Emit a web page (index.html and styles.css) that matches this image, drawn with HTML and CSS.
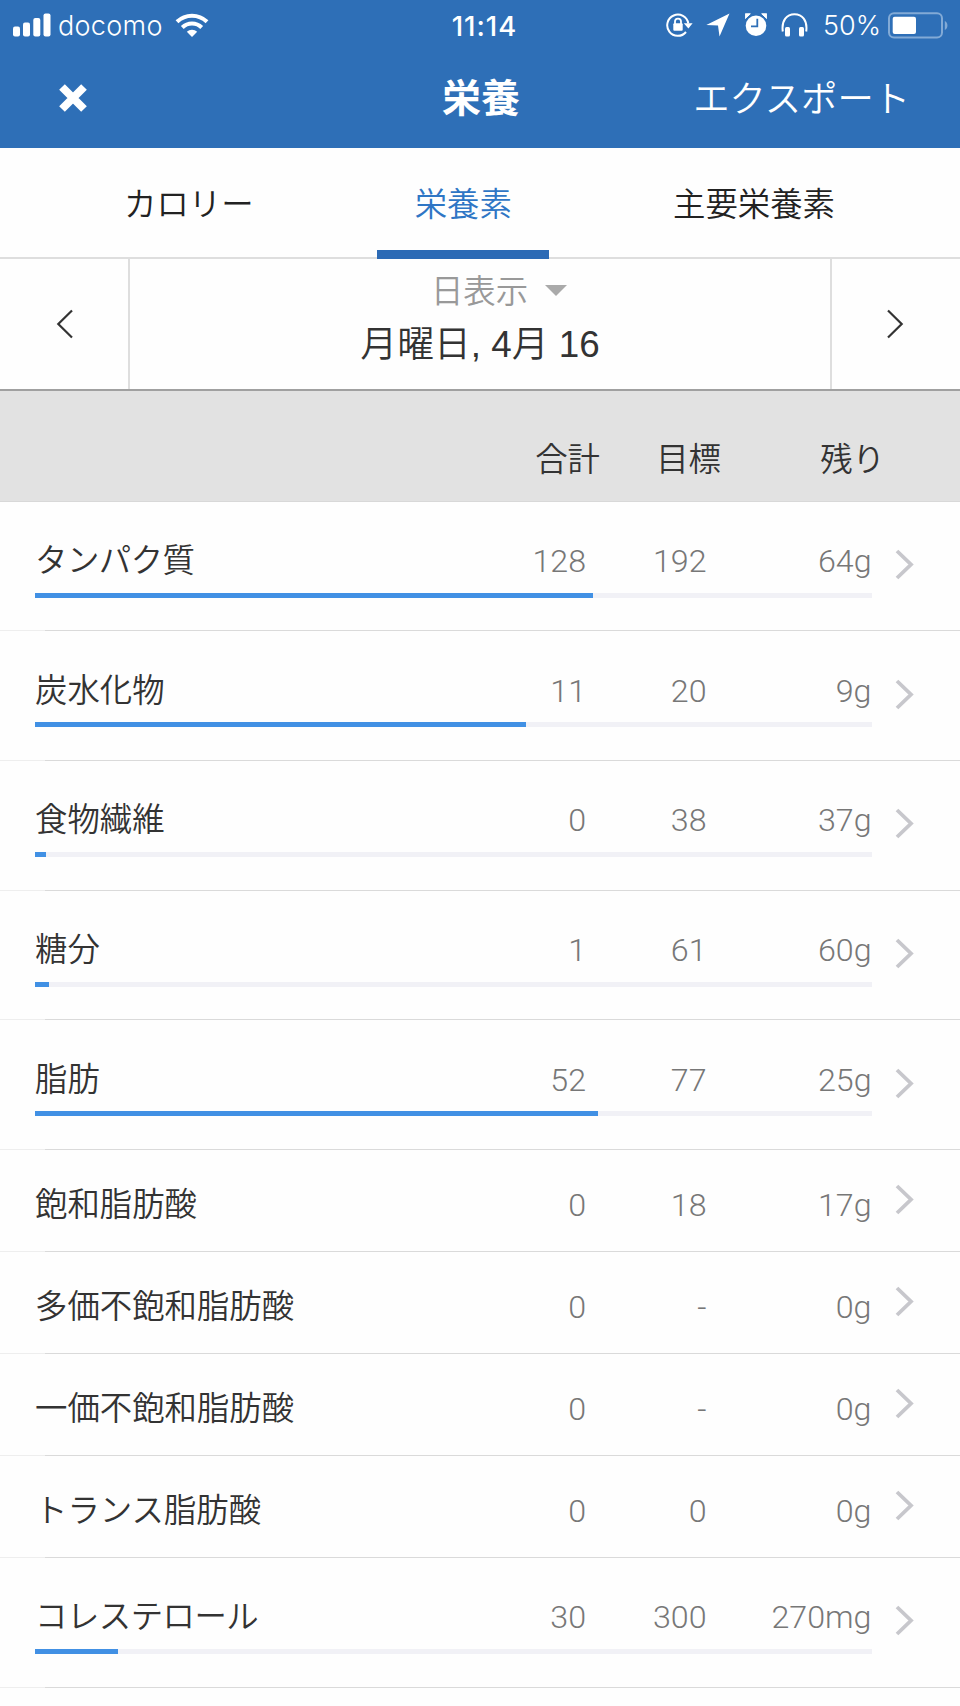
FILE: index.html
```
<!DOCTYPE html>
<html lang="ja">
<head>
    <meta charset="UTF-8">
    <title>栄養</title>

    <link rel="stylesheet" href="styles.css">

</head>
<body>

<svg class="defs">
    <symbol id="arrow" viewBox="0 0 20 32">
        <path d="M2 2 L16 15.5 L2 29" fill="none" stroke="currentColor" stroke-width="3.8"/>
    </symbol>
</svg>

<div class="header">
    <div class="status">
        <div class="status_left">
            <svg class="signal" width="38" height="24" viewBox="0 0 38 24" fill="#fff">
                <rect x="0" y="13.5" width="7" height="10" rx="2"/>
                <rect x="10" y="9.5" width="7" height="14" rx="2"/>
                <rect x="20.3" y="5" width="7" height="18.5" rx="2"/>
                <rect x="30.5" y="0.5" width="7" height="23" rx="2"/>
            </svg>
            <span class="carrier">docomo</span>
            <svg class="wifi" width="34" height="24" viewBox="0 0 34 24">
                <g fill="none" stroke="#fff" stroke-width="4">
                    <path d="M2 8.8 A21.5 21.5 0 0 1 32 8.8"/>
                    <path d="M7.3 14.5 A13.8 13.8 0 0 1 26.7 14.5"/>
                </g>
                <path d="M17 24 L11.8 18.8 A7.4 7.4 0 0 1 22.2 18.8 Z" fill="#fff"/>
            </svg>
        </div>
        <span class="time">11:14</span>
        <div class="status_right">
            <svg class="lock" width="27" height="24" viewBox="0 0 27 24">
                <path d="M20 19 A10.6 10.6 0 1 1 22.3 10.5" fill="none" stroke="#fff" stroke-width="2"/>
                <path d="M17.8 10.3 H26.6 L22.4 15.6 Z" fill="#fff"/>
                <rect x="7.3" y="10.2" width="9.4" height="7.6" rx="1" fill="#fff"/>
                <path d="M9 11 V8.6 A3 3 0 0 1 15 8.6 V11" fill="none" stroke="#fff" stroke-width="1.8"/>
            </svg>
            <svg class="location" width="24" height="24" viewBox="0 0 24 24" fill="#fff">
                <path d="M23.5 0.5 L13.5 23.5 L12 12.4 L0.3 12.1 Z"/>
            </svg>
            <svg class="alarm" width="22" height="24" viewBox="0 0 22 24">
                <circle cx="11" cy="12.7" r="10.3" fill="#fff"/>
                <path d="M0.3 5.5 V0.8 H5.3 Z M21.7 5.5 V0.8 H16.7 Z" fill="#fff" stroke="#fff" stroke-width="1"/>
                <path d="M12.3 5.8 V13.3 H6" fill="none" stroke="#2e6fb7" stroke-width="1.8"/>
            </svg>
            <svg class="phones" width="27" height="24" viewBox="0 0 27 24">
                <path d="M1.8 18.5 C0.2 7 6 1.2 13.5 1.2 C21 1.2 26.8 7 25.2 18.5" fill="none" stroke="#fff" stroke-width="2"/>
                <rect x="4" y="14" width="5" height="9.5" rx="1.5" fill="#fff"/>
                <rect x="18" y="14" width="5" height="9.5" rx="1.5" fill="#fff"/>
            </svg>
            <span class="percent">50%</span>
            <svg class="battery" width="60" height="27" viewBox="0 0 60 27">
                <rect x="1" y="1.2" width="53" height="24.3" rx="5" fill="none" stroke="#82aad6" stroke-width="2"/>
                <rect x="4.7" y="4.7" width="23.3" height="17.3" rx="2" fill="#fff"/>
                <path d="M56.8 9 C60.3 10.5 60.3 16.5 56.8 18 Z" fill="#82aad6"/>
            </svg>
        </div>
    </div>
    <div class="title_bar">
        <svg class="close" width="30" height="30" viewBox="0 0 30 30">
            <path d="M4 4 L26 26 M26 4 L4 26" stroke="#fff" stroke-width="8"/>
        </svg>
        <h1 class="title">栄養</h1>
        <span class="export">エクスポート</span>
    </div>
</div>

<div class="tabs">
    <div class="tab">カロリー</div>
    <div class="tab tab_on">栄養素</div>
    <div class="tab">主要栄養素</div>
</div>

<div class="date_bar">
    <div class="date_btn date_prev">
        <svg width="18" height="30" viewBox="0 0 18 30"><path d="M16 1.5 L2.3 15 L16 28.5" fill="none" stroke="#333" stroke-width="2.2"/></svg>
    </div>
    <div class="date">
        <div class="date_mode">日表示<span class="caret"></span></div>
        <div class="date_text">月曜日, 4月 16</div>
    </div>
    <div class="date_btn date_next">
        <svg width="18" height="30" viewBox="0 0 18 30"><path d="M2 1.5 L15.7 15 L2 28.5" fill="none" stroke="#333" stroke-width="2.2"/></svg>
    </div>
</div>

<div class="list_head">
    <span>合計</span>
    <span>目標</span>
    <span>残り</span>
</div>

<ul class="list">
    <li class="row">
        <span class="name kana">タンパク質</span><span class="num">128</span><span class="num">192</span><span class="num">64g</span>
        <svg class="arrow"><use href="#arrow"/></svg>
        <div class="bar"><div class="fill" style="width: 66.7%"></div></div>
    </li>
    <li class="row">
        <span class="name">炭水化物</span><span class="num">11</span><span class="num">20</span><span class="num">9g</span>
        <svg class="arrow"><use href="#arrow"/></svg>
        <div class="bar"><div class="fill" style="width: 58.7%"></div></div>
    </li>
    <li class="row">
        <span class="name">食物繊維</span><span class="num">0</span><span class="num">38</span><span class="num">37g</span>
        <svg class="arrow"><use href="#arrow"/></svg>
        <div class="bar"><div class="fill" style="width: 1.35%"></div></div>
    </li>
    <li class="row">
        <span class="name">糖分</span><span class="num">1</span><span class="num">61</span><span class="num">60g</span>
        <svg class="arrow"><use href="#arrow"/></svg>
        <div class="bar"><div class="fill" style="width: 1.64%"></div></div>
    </li>
    <li class="row">
        <span class="name">脂肪</span><span class="num">52</span><span class="num">77</span><span class="num">25g</span>
        <svg class="arrow"><use href="#arrow"/></svg>
        <div class="bar"><div class="fill" style="width: 67.3%"></div></div>
    </li>
    <li class="row row_short">
        <span class="name">飽和脂肪酸</span><span class="num">0</span><span class="num">18</span><span class="num">17g</span>
        <svg class="arrow"><use href="#arrow"/></svg>
    </li>
    <li class="row row_short">
        <span class="name">多価不飽和脂肪酸</span><span class="num">0</span><span class="num">-</span><span class="num">0g</span>
        <svg class="arrow"><use href="#arrow"/></svg>
    </li>
    <li class="row row_short">
        <span class="name">一価不飽和脂肪酸</span><span class="num">0</span><span class="num">-</span><span class="num">0g</span>
        <svg class="arrow"><use href="#arrow"/></svg>
    </li>
    <li class="row row_short">
        <span class="name">トランス脂肪酸</span><span class="num">0</span><span class="num">0</span><span class="num">0g</span>
        <svg class="arrow"><use href="#arrow"/></svg>
    </li>
    <li class="row">
        <span class="name kana">コレステロール</span><span class="num">30</span><span class="num">300</span><span class="num">270mg</span>
        <svg class="arrow"><use href="#arrow"/></svg>
        <div class="bar"><div class="fill" style="width: 9.9%"></div></div>
    </li>
</ul>

</body>
</html>
```
FILE: styles.css
```
* {
    margin: 0;
    padding: 0;
    list-style: none;
    box-sizing: border-box;
}

body {
    width: 960px;
    height: 1706px;
    overflow: hidden;
    background-color: #fefefe;
    color: #333;
    font-family: "Liberation Sans", "Noto Sans CJK JP", sans-serif;
    font-size: 32.4px;
    font-weight: 350;
    white-space: nowrap;
}

svg {
    display: block;
    flex: none;
}

.defs {
    display: none;
}

/* 上のバー */
.header {
    height: 148px;
    background-color: #2e6fb7;
    color: #fff;
}

.status {
    display: grid;
    grid-template-columns: 1fr auto 1fr;
    align-items: center;
    height: 48px;
    padding: 0 12px 0 13px;
    font-family: Inter, sans-serif;
    font-size: 27px;
    line-height: 48px;
}

.status_left,
.status_right {
    display: flex;
    align-items: center;
}

.status_right {
    justify-content: flex-end;
}

.carrier {
    margin-left: 7px;
    padding-top: 1px;
    width: 105px;
    letter-spacing: 0.3px;
    font-weight: 300;
}

.wifi {
    margin-left: 12px;
}

.time {
    padding: 2px 0 0 8px;
    font-size: 27.5px;
    font-weight: 500;
    letter-spacing: 1px;
}

.location {
    margin-left: 13px;
}

.alarm {
    margin-left: 15px;
}

.phones {
    margin-left: 14px;
}

.percent {
    width: 58px;
    margin: 0 7px 0 15px;
    padding-top: 1px;
    font-weight: 300;
}

.title_bar {
    display: grid;
    grid-template-columns: 1fr auto 1fr;
    align-items: center;
    height: 100px;
    padding: 0 50px 0 58px;
}

.title {
    padding: 0 6px 6px 0;
    font-size: 39px;
    font-weight: 700;
}

.export {
    justify-self: end;
    padding-bottom: 5px;
    font-size: 36.3px;
}

/* タブ */
.tabs {
    display: flex;
    justify-content: space-between;
    height: 111px;
    padding: 0 125px 0 124px;
    border-bottom: 2px solid #dedede;
    color: #222;
    line-height: 115px;
}

.tab {
    height: 111px;
}

.tab_on {
    width: 172px;
    border-bottom: 9px solid #2c6ab5;
    color: #2f76c5;
    text-align: center;
}

/* 日付 */
.date_bar {
    display: grid;
    grid-template-columns: 128px 1fr 128px;
    height: 132px;
    border-bottom: 2px solid #a0a0a0;
}

.date_btn {
    display: flex;
    align-items: center;
    justify-content: center;
}

.date_prev {
    padding-left: 2px;
}

.date_next {
    padding-right: 3px;
}

.date {
    border-left: 2px solid #dedede;
    border-right: 2px solid #dedede;
}

.date_mode {
    display: flex;
    align-items: center;
    justify-content: center;
    height: 48px;
    padding: 11px 0 0 38px;
    color: #999;
}

.caret {
    margin: 4px 0 0 17px;
    border: 11.5px solid transparent;
    border-top-color: #aaa;
    border-bottom: 0;
}

.date_text {
    margin-top: 10px;
    font-size: 36.8px;
    line-height: 56px;
    text-align: center;
}

/* 一覧 */
.list_head {
    display: grid;
    grid-template-columns: 600px 121px 164px;
    align-items: center;
    height: 110.5px;
    padding-top: 22px;
    background-color: #e2e2e2;
    border-bottom: 1px solid #d8d8d8;
    text-align: right;
}

.row {
    display: grid;
    grid-template-columns: 1fr 120px 120.5px 165px 42.5px;
    grid-template-rows: 91px 5px;
    height: 129.7px;
    padding: 0 46px 0 35px;
    border-bottom: 1px solid;
    border-image: linear-gradient(to right, #eee 46px, #dadada 46px) 1;
}

.name,
.num {
    padding-top: 27.5px;
    line-height: 64px;
}

.kana {
    letter-spacing: -0.5px;
}

.num {
    color: #777;
    font-family: Roboto, sans-serif;
    font-size: 32.2px;
    font-weight: 300;
    text-align: right;
}

.arrow {
    justify-self: end;
    align-self: end;
    width: 20px;
    height: 32px;
    margin: 0 -1px 11.5px 0;
    color: #c7c7cc;
}

.bar {
    grid-column: 1 / 5;
    height: 5px;
    background-color: #f1f1f6;
}

.fill {
    height: 5px;
    background-color: #4190e4;
}

.row_short {
    grid-template-rows: 102px;
    height: 102px;
}

.row_short .name,
.row_short .num {
    padding-top: 23px;
}

.row_short .arrow {
    margin-bottom: 36px;
}
```
